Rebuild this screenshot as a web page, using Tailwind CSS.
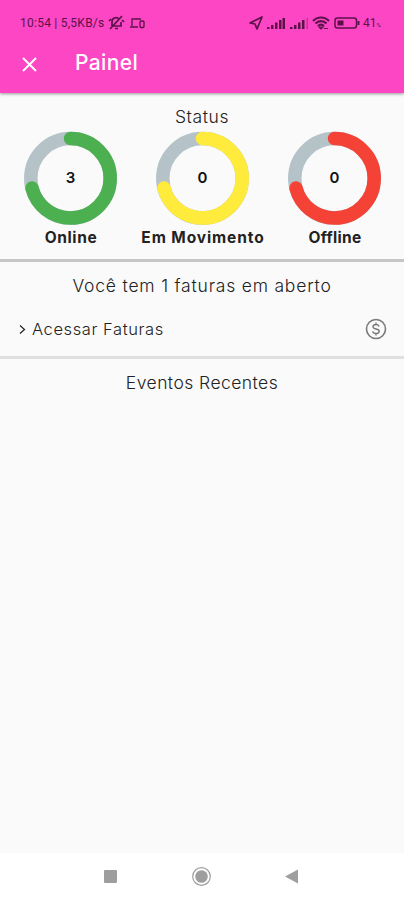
<!DOCTYPE html>
<html lang="pt-BR">
  <head>
    <meta charset="UTF-8" />
    <meta name="viewport" content="width=device-width, initial-scale=1.0" />
    <title>Painel</title>
    <script src="https://cdn.jsdelivr.net/npm/@tailwindcss/browser@4"></script>
  </head>
  <body class="bg-[#fafafa] text-[#222] font-['Inter','Liberation_Sans',sans-serif] h-screen flex flex-col overflow-hidden">

    <header class="h-[93px] shrink-0 bg-[#fc46c4] shadow-[0_1px_3px_rgba(0,0,0,0.4)]">
      <div class="h-[46px] pl-5 pr-[21px] flex items-center justify-between text-[#5c1249] font-['Roboto',sans-serif] text-[12px]">
        <div class="flex items-center">
          <span class="w-[85px] whitespace-nowrap tracking-[0.25px]">10:54 | 5,5KB/s</span>
          <svg class="w-[17px] h-4 ml-[3px]" viewBox="0 0 17 16" fill="none" stroke="currentColor" stroke-width="1.700">
            <path d="M4 11V7a4 4 0 0 1 7-3M13 7v4H5M7 13.500h3M2 14 14 1M1 6l2-2M14 5l2 2" />
          </svg>
          <svg class="w-4 h-3 ml-[5px]" viewBox="0 0 16 12" fill="none" stroke="currentColor" stroke-width="1.300">
            <path d="M2 9V2h9M0 10h8" />
            <rect x="10" y="4" width="4" height="6.500" rx="1" />
          </svg>
        </div>
        <div class="flex items-center">
          <svg class="w-[14px] h-[14px]" viewBox="0 0 14 14" fill="none" stroke="currentColor" stroke-width="1.700" stroke-linejoin="round">
            <path d="M1 7 13 1 8 13 6 8Z" />
          </svg>
          <svg class="w-[18px] h-3 ml-1" viewBox="0 0 18 12" fill="currentColor">
            <path d="M0 10h2.500v2H0zM4 8h2.500v4H4zM8 5.500h2.500V12H8zM12 3h2.500v9H12zM15.500 1H18v11h-2.500z" />
          </svg>
          <svg class="w-[18px] h-3 ml-[5px]" viewBox="0 0 18 12" fill="currentColor">
            <path d="M0 10h2.500v2H0zM4 8h2.500v4H4zM8 5.500h2.500V12H8zM12 3h2.500v9H12z" />
            <path d="M16.500 1H18v11h-1.500z" opacity=".35" />
          </svg>
          <svg class="w-[18px] h-[14px] ml-[4px]" viewBox="0 0 18 14" fill="none" stroke="currentColor" stroke-width="2.100">
            <path d="M1 5a11 11 0 0 1 16 0M3.500 7.500a7.500 7.500 0 0 1 11 0M6 10a4.500 4.500 0 0 1 6 0" />
            <path d="M7 11h4l-2 2zM12 12.500h4" stroke-width="1.200" />
          </svg>
          <svg class="w-[26px] h-3 ml-[4px]" viewBox="0 0 26 12" fill="none" stroke="currentColor" stroke-width="1.500">
            <rect x="1" y="1" width="21.500" height="10" rx="2.500" />
            <path d="M24.500 4v4" stroke-width="2" />
            <rect x="3.500" y="3.500" width="6" height="5" fill="currentColor" stroke="none" />
          </svg>
          <span class="w-5 ml-[3px] text-[12px] whitespace-nowrap">41<span class="text-[6px]">%</span></span>
        </div>
      </div>
      <div class="h-[34px] pl-[22px] flex items-center text-white">
        <svg class="w-[15px] h-[15px] mt-[2px]" viewBox="0 0 15 15" fill="none" stroke="currentColor" stroke-width="2">
          <path d="M1 1l13 13M14 1 1 14" />
        </svg>
        <h1 class="ml-[38px] text-[21px] font-medium tracking-[0.4px]">Painel</h1>
      </div>
    </header>

    <main class="grow">
      <section class="h-[169px] pt-[14px] border-b-3 border-[#c6c6c6]">
        <h2 class="h-5 leading-5 text-center text-[17.5px] font-light tracking-[0.6px]">Status</h2>
        <div class="pl-[5px] pr-[3px] pt-1 grid grid-cols-3">
          <div class="flex flex-col items-center">
            <svg class="w-[94px] h-[94px] font-semibold text-[15px]" viewBox="0 0 94 94" fill="none" stroke-width="13.500">
              <circle cx="46.500" cy="47.300" r="39.700" stroke="#b5c3c9" />
              <circle cx="46.500" cy="47.300" r="39.700" stroke="#4caf50" stroke-linecap="round" pathLength="100" stroke-dasharray="71 29" transform="rotate(-90 46.500 47.300)" />
              <text x="46.500" y="52" text-anchor="middle" fill="#111">3</text>
            </svg>
            <span class="mt-[3px] h-5 leading-5 text-[15.5px] font-bold tracking-[0.6px] whitespace-nowrap">Online</span>
          </div>
          <div class="flex flex-col items-center">
            <svg class="w-[94px] h-[94px] font-semibold text-[15px]" viewBox="0 0 94 94" fill="none" stroke-width="13.500">
              <circle cx="46.500" cy="47.300" r="39.700" stroke="#b5c3c9" />
              <circle cx="46.500" cy="47.300" r="39.700" stroke="#ffeb3b" stroke-linecap="round" pathLength="100" stroke-dasharray="71 29" transform="rotate(-90 46.500 47.300)" />
              <text x="46.500" y="52" text-anchor="middle" fill="#111">0</text>
            </svg>
            <span class="mt-[3px] h-5 leading-5 text-[15.5px] font-bold tracking-[0.9px] whitespace-nowrap">Em Movimento</span>
          </div>
          <div class="flex flex-col items-center">
            <svg class="w-[94px] h-[94px] font-semibold text-[15px]" viewBox="0 0 94 94" fill="none" stroke-width="13.500">
              <circle cx="46.500" cy="47.300" r="39.700" stroke="#b5c3c9" />
              <circle cx="46.500" cy="47.300" r="39.700" stroke="#f44336" stroke-linecap="round" pathLength="100" stroke-dasharray="71 29" transform="rotate(-90 46.500 47.300)" />
              <text x="46.500" y="52" text-anchor="middle" fill="#111">0</text>
            </svg>
            <span class="mt-[3px] h-5 leading-5 text-[15.5px] font-bold tracking-[0.3px] whitespace-nowrap">Offline</span>
          </div>
        </div>
      </section>

      <section class="h-[97px] pt-[14px] border-b-3 border-[#e0e0e0]">
        <h2 class="h-5 leading-5 text-center text-[17.5px] font-light tracking-[0.8px]">Você tem 1 faturas em aberto</h2>
        <a href="#" class="mt-5 h-[26px] pl-[19px] pr-[17px] flex items-center">
          <svg class="w-[7px] h-[9px]" viewBox="0 0 7 9" fill="none" stroke="currentColor" stroke-width="1.200">
            <path d="M1 .5l4.500 4L1 8.500" />
          </svg>
          <span class="ml-[6px] text-[16.5px] font-light tracking-[0.58px]">Acessar Faturas</span>
          <svg class="ml-auto w-[22px] h-[22px] text-[#7a7a7a]" viewBox="0 0 22 22" fill="none" stroke="currentColor" stroke-width="1.600">
            <circle cx="11" cy="11" r="9.500" />
            <path d="M14 8.500c-.3-1.300-1.400-2-3-2-1.700 0-3 .8-3 2.200 0 3.200 6.200 1.300 6.200 4.500 0 1.500-1.400 2.300-3.200 2.300s-3-.8-3.300-2.200M11 4.500v2M11 15.500v2" stroke-width="1.400" />
          </svg>
        </a>
      </section>

      <section class="pt-[14px]">
        <h2 class="h-5 leading-5 text-center text-[17.5px] font-light tracking-[0.45px]">Eventos Recentes</h2>
      </section>
    </main>

    <nav class="h-[47px] shrink-0 bg-white pl-[104px] pr-[106px] flex items-center justify-between text-[#9e9e9e]">
      <svg class="w-[13px] h-[13px]" viewBox="0 0 13 13" fill="currentColor"><rect width="13" height="13" rx="1" /></svg>
      <svg class="w-5 h-5" viewBox="0 0 20 20" fill="currentColor">
        <circle cx="10.500" cy="9.500" r="6.300" />
        <circle cx="10.500" cy="9.500" r="8.800" fill="none" stroke="currentColor" stroke-width="1.200" />
      </svg>
      <svg class="w-[13px] h-[15px]" viewBox="0 0 13 15" fill="currentColor"><path d="M0 7.500 13 .5v14z" /></svg>
    </nav>
  </body>
</html>
